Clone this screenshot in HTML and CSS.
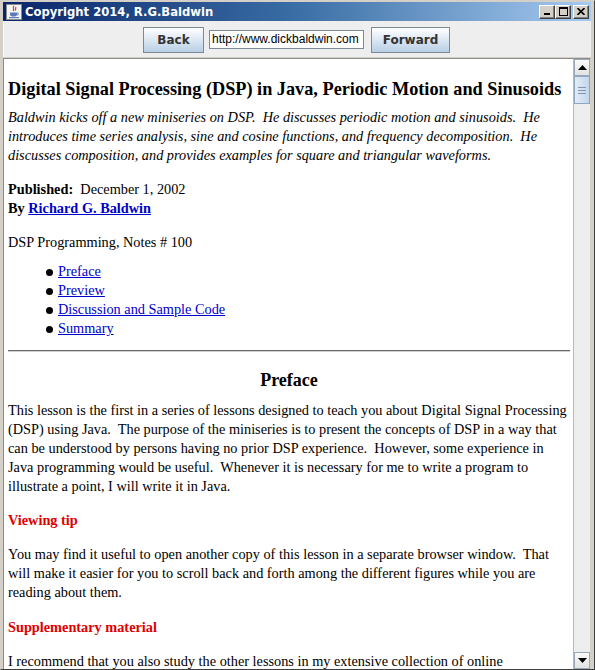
FILE: index.html
```html
<!DOCTYPE html>
<html>
<head>
<meta charset="utf-8">
<link rel="stylesheet" href="styles.css">
</head>
<body>
<div class="window">
  <div class="titlebar">
    <svg class="app-icon" width="16" height="16" viewBox="0 0 16 16">
      <rect x="0.5" y="0.5" width="15" height="15" fill="#f4f4f4" stroke="#8a8a8a"/>
      <path d="M8 2 C6 4 9 5 7 7 M10 3 C9 4.5 10.5 5 9 6.5" stroke="#d8401a" stroke-width="1.2" fill="none"/>
      <path d="M4 8.5 H11 V10.5 C11 12 9.5 12.5 7.5 12.5 C5.5 12.5 4 12 4 10.5 Z" fill="#5a7bb5"/>
      <path d="M11 9 C13 9 13 11 11 11" stroke="#5a7bb5" stroke-width="1" fill="none"/>
      <rect x="3" y="13" width="10" height="1.2" fill="#5a7bb5"/>
    </svg>
    <span class="title-text">Copyright 2014, R.G.Baldwin</span>
    <div class="title-buttons">
      <span class="tbtn"><svg width="8" height="7" viewBox="0 0 8 7"><rect x="1" y="5" width="6" height="2" fill="#000"/></svg></span>
      <span class="tbtn"><svg width="9" height="9" viewBox="0 0 9 9"><rect x="0.5" y="0.5" width="8" height="8" fill="none" stroke="#000"/><rect x="0" y="0" width="9" height="2" fill="#000"/></svg></span>
      <span class="tbtn close"><svg width="8" height="7" viewBox="0 0 8 7"><path d="M0.5 0 L7.5 7 M7.5 0 L0.5 7" stroke="#000" stroke-width="1.6"/></svg></span>
    </div>
  </div>
  <div class="toolbar">
    <button class="nav-btn back">Back</button>
    <input class="url" type="text" value="http://www.dickbaldwin.com">
    <button class="nav-btn fwd">Forward</button>
  </div>
  <div class="viewport">
    <div class="page">
      <h1>Digital Signal Processing (DSP) in Java, Periodic Motion and Sinusoids</h1>
      <p class="abstract">Baldwin kicks off a new miniseries on DSP.&nbsp; He discusses periodic motion and sinusoids.&nbsp; He<br>introduces time series analysis, sine and cosine functions, and frequency decomposition.&nbsp; He<br>discusses composition, and provides examples for square and triangular waveforms.</p>
      <p><b>Published:</b>&nbsp; December 1, 2002<br><b>By <a href="#">Richard G. Baldwin</a></b></p>
      <p class="series">DSP Programming, Notes # 100</p>
      <ul class="toc">
        <li><a href="#">Preface</a></li>
        <li><a href="#">Preview</a></li>
        <li><a href="#">Discussion and Sample Code</a></li>
        <li><a href="#">Summary</a></li>
      </ul>
      <hr>
      <h2>Preface</h2>
      <p class="first">This lesson is the first in a series of lessons designed to teach you about Digital Signal Processing<br>(DSP) using Java.&nbsp; The purpose of the miniseries is to present the concepts of DSP in a way that<br>can be understood by persons having no prior DSP experience.&nbsp; However, some experience in<br>Java programming would be useful.&nbsp; Whenever it is necessary for me to write a program to<br>illustrate a point, I will write it in Java.</p>
      <h3>Viewing tip</h3>
      <p>You may find it useful to open another copy of this lesson in a separate browser window.&nbsp; That<br>will make it easier for you to scroll back and forth among the different figures while you are<br>reading about them.</p>
      <h3>Supplementary material</h3>
      <p>I recommend that you also study the other lessons in my extensive collection of online</p>
    </div>
    <div class="scrollbar">
      <div class="sb-btn"><svg width="9" height="5" viewBox="0 0 9 5"><path d="M0 5 L4.5 0 L9 5 Z" fill="#000"/></svg></div>
      <div class="sb-track">
        <div class="sb-thumb"><span></span><span></span><span></span></div>
      </div>
      <div class="sb-btn"><svg width="9" height="5" viewBox="0 0 9 5"><path d="M0 0 L4.5 5 L9 0 Z" fill="#000"/></svg></div>
    </div>
  </div>
</div>
</body>
</html>
```

FILE: styles.css
```css
html, body {
  margin: 0;
  padding: 0;
  background: #d4d0c8;
}
.window {
  width: 595px;
  height: 670px;
  box-sizing: border-box;
  border: 1px solid #404040;
  border-top-color: #d4d0c8;
  border-left-color: #d4d0c8;
  padding: 1px 3px 0 2px;
  background: #d4d0c8;
  display: flex;
  flex-direction: column;
  overflow: hidden;
}
.titlebar {
  height: 19px;
  flex: none;
  display: flex;
  align-items: center;
  background: linear-gradient(to right, #0a246a, #3a6ea5 50%, #a6caf0);
  padding: 0 2px 0 3px;
}
.app-icon {
  flex: none;
  margin-right: 3px;
}
.title-text {
  color: #fff;
  font-family: "DejaVu Sans", "Liberation Sans", sans-serif;
  font-weight: bold;
  font-size: 11.6px;
  flex: 1;
  white-space: nowrap;
}
.title-buttons {
  display: flex;
  gap: 0;
}
.tbtn {
  width: 16px;
  height: 14px;
  box-sizing: border-box;
  background: #d4d0c8;
  border: 1px solid;
  border-color: #fff #404040 #404040 #fff;
  box-shadow: inset -1px -1px 0 #808080;
  display: flex;
  align-items: center;
  justify-content: center;
}
.tbtn.close {
  margin-left: 2px;
}
.toolbar {
  height: 36px;
  flex: none;
  background: #eeeeee;
  display: flex;
  align-items: center;
  justify-content: center;
  gap: 5px;
  border-left: 1px solid #fff;
  padding-right: 2px;
}
.nav-btn {
  height: 26px;
  box-sizing: border-box;
  border: 1px solid #7a8a99;
  border-radius: 0;
  background: linear-gradient(to bottom, #ffffff, #dfe9f4 45%, #b8cfe5);
  font-family: "DejaVu Sans", "Liberation Sans", sans-serif;
  font-weight: bold;
  font-size: 12px;
  color: #333;
  padding: 0;
  margin-top: 1px;
}
.back { width: 61px; }
.fwd { width: 79px; margin-left: 2px; }
.url {
  width: 155px;
  height: 19px;
  box-sizing: border-box;
  border: 1px solid #7a8a99;
  font-family: "Liberation Sans", Arial, sans-serif;
  font-size: 12px;
  padding: 0 2px;
  color: #000;
  background: #fff;
  outline: none;
}
.viewport {
  flex: 1;
  display: flex;
  min-height: 0;
  border: 1px solid #8c8c8c;
  border-right-color: #d4d0c8;
  border-bottom: none;
  margin-top: 1px;
  background: #fff;
}
.page {
  flex: 1;
  overflow: hidden;
  padding: 0 3px 0 4px;
  font-family: "Liberation Serif", "Times New Roman", serif;
  font-size: 14.3px;
  line-height: 19px;
  color: #000;
}
.page p {
  margin: 15px 0;
  white-space: nowrap;
}
.page a {
  color: #0000cc;
}
h1 {
  font-size: 18.25px;
  font-weight: bold;
  margin: 19px 0 0;
  line-height: 22px;
  white-space: nowrap;
}
.abstract {
  font-style: italic;
}
.page p.abstract {
  margin-top: 8px;
}
.page p.series {
  margin-bottom: 10px;
}
.toc {
  margin: 0;
  padding-left: 50px;
  list-style: none;
}
.toc li {
  position: relative;
}
.toc li::before {
  content: "";
  position: absolute;
  left: -12px;
  top: 7px;
  width: 7px;
  height: 7px;
  border-radius: 50%;
  background: #000;
}
hr {
  margin: 12px 0 0;
  border: none;
  border-top: 1px solid #6a6a6a;
  border-bottom: 1px solid #d0d0d0;
  height: 0;
}
h2 {
  text-align: center;
  font-size: 18px;
  margin: 17px 0 0;
  line-height: 22px;
}
.page p.first {
  margin-top: 10px;
}
h3 {
  color: #e00000;
  font-size: 14.3px;
  margin: 15px 0;
  line-height: 19px;
}
.page h3 + p + h3 {
  margin-top: 16px;
}
.scrollbar {
  width: 17px;
  flex: none;
  display: flex;
  flex-direction: column;
  background: #eeeeee;
  border-left: 1px solid #b8b8b8;
  box-sizing: border-box;
}
.sb-btn {
  height: 17px;
  flex: none;
  box-sizing: border-box;
  border: 1px solid #9aa8b8;
  background: linear-gradient(to bottom, #fafafa, #e2e2e2);
  display: flex;
  align-items: center;
  justify-content: center;
}
.sb-track {
  flex: 1;
  background: #eeeeee;
}
.sb-thumb {
  height: 28px;
  box-sizing: border-box;
  border: 1px solid #8fa6c1;
  background: linear-gradient(to right, #e3ecf7, #c3d6ec);
  display: flex;
  flex-direction: column;
  align-items: center;
  justify-content: center;
  gap: 2px;
}
.sb-thumb span {
  width: 8px;
  height: 1px;
  background: #7f95b0;
}
```
